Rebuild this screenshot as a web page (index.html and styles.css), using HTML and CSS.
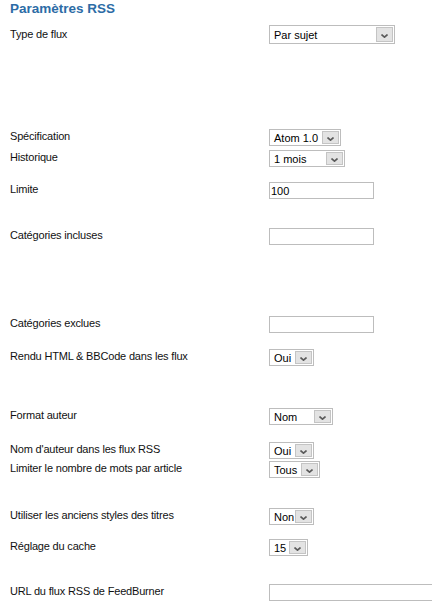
FILE: index.html
```html
<!DOCTYPE html>
<html lang="fr">
<head>
<meta charset="utf-8">
<title>Paramètres RSS</title>
<link rel="stylesheet" href="styles.css">
</head>
<body>
<div class="panel">
  <h2 class="title">Paramètres RSS</h2>

  <div class="row tall gap-85">
    <span class="label">Type de flux</span>
    <div class="select w126"><span class="value">Par sujet</span><span class="btn"><svg viewBox="0 0 7 4" width="7" height="4"><path d="M0.5 0.5 L3.5 3.2 L6.5 0.5" fill="none" stroke="#5a5a5a" stroke-width="1.6"/></svg></span></div>
  </div>

  <div class="row gap-4">
    <span class="label">Spécification</span>
    <div class="select w72"><span class="value">Atom 1.0</span><span class="btn"><svg viewBox="0 0 7 4" width="7" height="4"><path d="M0.5 0.5 L3.5 3.2 L6.5 0.5" fill="none" stroke="#5a5a5a" stroke-width="1.6"/></svg></span></div>
  </div>

  <div class="row gap-15">
    <span class="label">Historique</span>
    <div class="select w76"><span class="value">1 mois</span><span class="btn"><svg viewBox="0 0 7 4" width="7" height="4"><path d="M0.5 0.5 L3.5 3.2 L6.5 0.5" fill="none" stroke="#5a5a5a" stroke-width="1.6"/></svg></span></div>
  </div>

  <div class="row gap-29">
    <span class="label">Limite</span>
    <input class="field" type="text" value="100">
  </div>

  <div class="row gap-71">
    <span class="label">Catégories incluses</span>
    <input class="field" type="text" value="">
  </div>

  <div class="row gap-16">
    <span class="label">Catégories exclues</span>
    <input class="field" type="text" value="">
  </div>

  <div class="row gap-42">
    <span class="label">Rendu HTML &amp; BBCode dans les flux</span>
    <div class="select w45"><span class="value">Oui</span><span class="btn"><svg viewBox="0 0 7 4" width="7" height="4"><path d="M0.5 0.5 L3.5 3.2 L6.5 0.5" fill="none" stroke="#5a5a5a" stroke-width="1.6"/></svg></span></div>
  </div>

  <div class="row gap-17">
    <span class="label">Format auteur</span>
    <div class="select w64"><span class="value">Nom</span><span class="btn"><svg viewBox="0 0 7 4" width="7" height="4"><path d="M0.5 0.5 L3.5 3.2 L6.5 0.5" fill="none" stroke="#5a5a5a" stroke-width="1.6"/></svg></span></div>
  </div>

  <div class="row gap-2">
    <span class="label">Nom d'auteur dans les flux RSS</span>
    <div class="select w45"><span class="value">Oui</span><span class="btn"><svg viewBox="0 0 7 4" width="7" height="4"><path d="M0.5 0.5 L3.5 3.2 L6.5 0.5" fill="none" stroke="#5a5a5a" stroke-width="1.6"/></svg></span></div>
  </div>

  <div class="row gap-30">
    <span class="label">Limiter le nombre de mots par article</span>
    <div class="select w51"><span class="value">Tous</span><span class="btn"><svg viewBox="0 0 7 4" width="7" height="4"><path d="M0.5 0.5 L3.5 3.2 L6.5 0.5" fill="none" stroke="#5a5a5a" stroke-width="1.6"/></svg></span></div>
  </div>

  <div class="row gap-14">
    <span class="label">Utiliser les anciens styles des titres</span>
    <div class="select w45"><span class="value">Non</span><span class="btn"><svg viewBox="0 0 7 4" width="7" height="4"><path d="M0.5 0.5 L3.5 3.2 L6.5 0.5" fill="none" stroke="#5a5a5a" stroke-width="1.6"/></svg></span></div>
  </div>

  <div class="row gap-28">
    <span class="label">Réglage du cache</span>
    <div class="select w39"><span class="value">15</span><span class="btn"><svg viewBox="0 0 7 4" width="7" height="4"><path d="M0.5 0.5 L3.5 3.2 L6.5 0.5" fill="none" stroke="#5a5a5a" stroke-width="1.6"/></svg></span></div>
  </div>

  <div class="row">
    <span class="label">URL du flux RSS de FeedBurner</span>
    <input class="field wide" type="text" value="">
  </div>
</div>
</body>
</html>
```

FILE: styles.css
```css
html, body {
  margin: 0;
  padding: 0;
  background: #ffffff;
  overflow: hidden;
}

body {
  font-family: "Liberation Sans", Arial, sans-serif;
  font-size: 11px;
  color: #000000;
}

.panel {
  padding: 0 0 0 10px;
  width: 600px;
}

.title {
  margin: 0 0 7px 0;
  font-size: 13.5px;
  line-height: 18px;
  font-weight: bold;
  color: #2c6ca6;
}

.row {
  display: flex;
  align-items: center;
  height: 17px;
}

.row.tall {
  height: 19px;
}

.label {
  width: 259px;
  flex: none;
  line-height: 13px;
  padding-bottom: 2px;
  letter-spacing: -0.18px;
  color: #111111;
}

.row.tall .label {
  padding-bottom: 0;
}

.gap-2 { margin-bottom: 2px; }
.gap-4 { margin-bottom: 4px; }
.gap-14 { margin-bottom: 14px; }
.gap-15 { margin-bottom: 15px; }
.gap-16 { margin-bottom: 16px; }
.gap-17 { margin-bottom: 17px; }
.gap-28 { margin-bottom: 28px; }
.gap-29 { margin-bottom: 29px; }
.gap-30 { margin-bottom: 30px; }
.gap-42 { margin-bottom: 42px; }
.gap-71 { margin-bottom: 71px; }
.gap-85 { margin-bottom: 85px; }

.select {
  box-sizing: border-box;
  height: 100%;
  display: flex;
  border: 1px solid #bdbdbd;
  background: #ffffff;
}

.select .value {
  flex: 1;
  padding-left: 4px;
  display: flex;
  align-items: center;
  white-space: nowrap;
  overflow: hidden;
}

.select .btn {
  box-sizing: border-box;
  width: 17px;
  flex: none;
  margin: 1px;
  border: 1px solid #c4c4c4;
  background: #e3e3e3;
  display: flex;
  align-items: center;
  justify-content: center;
  padding-top: 3px;
}

.select .btn svg {
  display: block;
}

.w126 { width: 126px; }
.w72 { width: 72px; }
.w76 { width: 76px; }
.w64 { width: 64px; }
.w51 { width: 51px; }
.w45 { width: 45px; }
.w39 { width: 39px; }

.field {
  box-sizing: border-box;
  width: 105px;
  height: 17px;
  margin: 0;
  padding: 0 1px;
  border: 1px solid #bdbdbd;
  font-family: "Liberation Sans", Arial, sans-serif;
  font-size: 11px;
  color: #000000;
  background: #ffffff;
  outline: none;
}

.field.wide {
  width: 170px;
}
```
